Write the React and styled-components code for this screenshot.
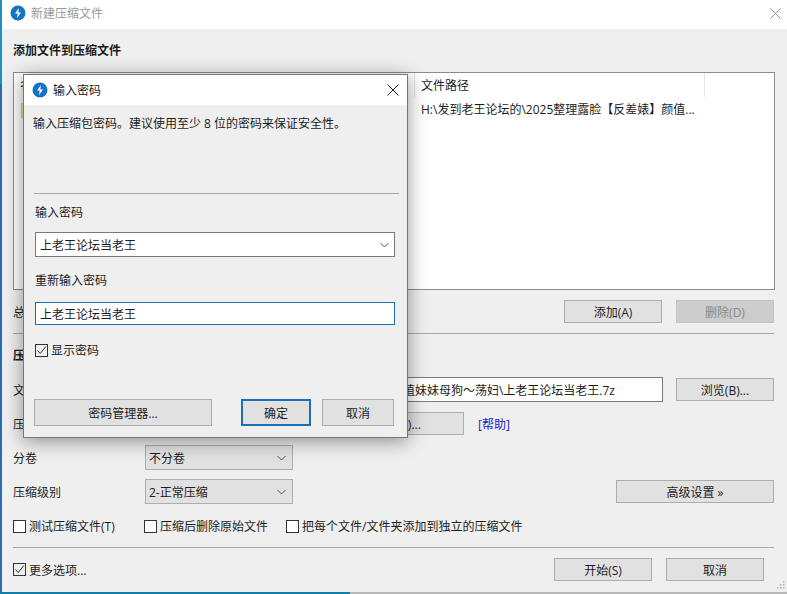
import styled, { createGlobalStyle } from "styled-components";

const Global = createGlobalStyle`
  html, body { margin: 0; padding: 0; }
  body {
    width: 787px;
    height: 594px;
    overflow: hidden;
    font-family: "Open Sans", "Noto Sans CJK SC", sans-serif;
    font-size: 12px;
    color: #1c1c1c;
  }
  * { box-sizing: border-box; }
`;

const Desktop = styled.div`
  position: relative;
  width: 787px;
  height: 594px;
  padding: 0 0 2px 2px;
  background:
    linear-gradient(90deg, #0f7fa8 0 350px, #b9b9b9 350px) bottom / 100% 2px no-repeat,
    linear-gradient(180deg, #1b93bf 0 84px, #2a6db5 84px);
`;

const Window = styled.div`
  position: relative;
  height: 100%;
  display: flex;
  flex-direction: column;
  background: #efefef;
`;

const TitleBar = styled.div`
  height: 29px;
  flex: none;
  display: flex;
  align-items: center;
  gap: 5px;
  padding: 0 6px 3px 8px;
  background: #fff;
  color: #999;
`;

const DialogTitleBar = styled(TitleBar)`
  height: 30px;
  padding: 0 8px 1px 8px;
  color: #1c1c1c;
`;

const TitleText = styled.span`
  flex: 1;
`;

const Body = styled.div`
  flex: 1;
  display: flex;
  flex-direction: column;
  padding: 14px 12px 0 11px;
`;

const Heading = styled.div`
  font-weight: 700;
  line-height: 16px;
  margin-top: ${(p) => p.$top || 0}px;
`;

const FileList = styled.div`
  height: 218px;
  margin-top: 13px;
  background: #fff;
  border: 1px solid #8c8c8c;
`;

const ListHead = styled.div`
  height: 24px;
  display: flex;
  line-height: 25px;
`;

const HeadCell = styled.div`
  width: ${(p) => p.$w}px;
  padding-left: 6px;
  border-right: 1px solid #e5e5e5;
`;

const ListRow = styled.div`
  display: flex;
  align-items: center;
  height: 24px;
`;

const RowCell = styled.div`
  width: ${(p) => p.$w}px;
  padding-left: 6px;
  white-space: nowrap;
  overflow: hidden;
`;

const FolderMark = styled.span`
  display: inline-block;
  width: 14px;
  height: 15px;
  margin-left: 1px;
  vertical-align: middle;
  background: #f3e3ad;
  border-left: 1px solid #d8c88a;
`;

const ActionRow = styled.div`
  display: flex;
  align-items: center;
  margin-top: 10px;
  padding-right: 1px;
  gap: 14px;
`;

const Stretch = styled.div`
  flex: 1;
`;

const Button = styled.button`
  width: ${(p) => p.$w || 98}px;
  height: ${(p) => p.$h || 23}px;
  flex: none;
  padding: 0;
  margin-left: ${(p) => p.$left || 0}px;
  margin-right: ${(p) => p.$right || 0}px;
  font: inherit;
  color: ${(p) => (p.disabled ? "#8a8a8a" : "#1c1c1c")};
  background: ${(p) => (p.disabled ? "#cccccc" : "#e1e1e1")};
  border: ${(p) => (p.$primary ? "2px solid #1a6fb5" : p.disabled ? "1px solid #c4c4c4" : "1px solid #adadad")};
`;

const Divider = styled.div`
  height: 1px;
  flex: none;
  margin-top: ${(p) => p.$top}px;
  margin-right: 1px;
  background: #a8a8a8;
`;

const FormRow = styled.div`
  display: flex;
  align-items: center;
  height: ${(p) => p.$h || 25}px;
  margin-top: ${(p) => p.$top}px;
  padding-right: 1px;
`;

const FormLabel = styled.div`
  width: 132px;
  flex: none;
`;

const PathField = styled.div`
  width: 518px;
  height: 25px;
  flex: none;
  display: flex;
  align-items: center;
  justify-content: flex-end;
  overflow: hidden;
  white-space: nowrap;
  padding-right: 47px;
  background: #fff;
  border: 1px solid #7a7a7a;
`;

const Select = styled.div`
  width: ${(p) => p.$w || 148}px;
  height: 25px;
  flex: none;
  display: flex;
  align-items: center;
  justify-content: space-between;
  padding: 0 6px 0 3px;
  background: #e1e1e1;
  border: 1px solid #adadad;
`;

const Link = styled.a`
  color: #1a1acc;
  margin-left: 14px;
`;

const CheckRow = styled.div`
  display: flex;
  align-items: center;
  margin-top: ${(p) => p.$top}px;
  height: 16px;
`;

const CheckLabel = styled.label`
  display: flex;
  align-items: center;
  gap: 3px;
  width: ${(p) => p.$w || "auto"};
`;

const Box = styled.span`
  width: 13px;
  height: 13px;
  flex: none;
  display: flex;
  background: ${(p) => (p.$clear ? "transparent" : "#fff")};
  border: 1px solid #333;
`;

const Footer = styled.div`
  display: flex;
  align-items: center;
  gap: 14px;
  margin-top: 10px;
  padding-right: 11px;
`;

const Grip = styled.svg`
  position: absolute;
  right: 2px;
  bottom: 2px;
`;

const Dialog = styled.div`
  position: absolute;
  left: 23px;
  top: 74px;
  width: 385px;
  height: 364px;
  display: flex;
  flex-direction: column;
  background: #efefef;
  border: 1px solid #777;
  box-shadow: 0 3px 18px rgba(0, 0, 0, 0.42);
`;

const DialogBody = styled.div`
  flex: 1;
  display: flex;
  flex-direction: column;
  padding: 0 8px 0 10px;
`;

const Hint = styled.div`
  margin: 11px 0 0 -1px;
  line-height: 16px;
`;

const DialogLine = styled.div`
  height: 1px;
  margin-top: 61px;
  background: #a8a8a8;
`;

const FieldLabel = styled.div`
  line-height: 16px;
  margin: ${(p) => p.$top}px 0 0 1px;
`;

const PasswordSelect = styled.div`
  width: 360px;
  height: 25px;
  margin: 11px 0 0 1px;
  display: flex;
  align-items: center;
  justify-content: space-between;
  padding: 0 5px 0 4px;
  background: #fff;
  border: 1px solid #7a7a7a;
`;

const PasswordInput = styled.div`
  width: 360px;
  height: 23px;
  margin: 13px 0 0 1px;
  display: flex;
  align-items: center;
  padding-left: 4px;
  background: #fff;
  border: 1px solid #1a6fb5;
`;

const ShowRow = styled.div`
  margin: 16px 0 0 1px;
`;

const DialogButtons = styled.div`
  display: flex;
  align-items: center;
  margin-top: 40px;
`;

const Logo = () => (
  <svg width="16" height="16" viewBox="0 0 16 16">
    <circle cx="8" cy="8" r="7.5" fill="#1572c6" />
    <path d="M9 3 5 8.6h2.7L7 13l4-5.6H8.3z" fill="#fff" />
  </svg>
);

const Close = ({ color, size }) => (
  <svg width={size} height={size} viewBox="0 0 12 12">
    <path d="M.5.5l11 11M11.5.5l-11 11" stroke={color} strokeWidth="1" fill="none" />
  </svg>
);

const Chevron = () => (
  <svg width="9" height="6" viewBox="0 0 9 6">
    <path d="M.5 1l4 4 4-4" stroke="#555" strokeWidth="1" fill="none" />
  </svg>
);

const Tick = () => (
  <svg width="11" height="11" viewBox="0 0 11 11">
    <path d="M1.5 5.5l2.8 3L9.8 1.5" stroke="#333" strokeWidth="1" fill="none" />
  </svg>
);

const Check = ({ checked, width, children }) => (
  <CheckLabel $w={width}>
    <Box $clear={checked}>{checked && <Tick />}</Box>
    {children}
  </CheckLabel>
);

const App = () => {
  return (
    <Desktop>
      <Global />
      <Window>
        <TitleBar>
          <Logo />
          <TitleText>新建压缩文件</TitleText>
          <Close color="#8a8a8a" size={11} />
        </TitleBar>
        <Body>
          <Heading>添加文件到压缩文件</Heading>
          <FileList>
            <ListHead>
              <HeadCell $w={401}>名称</HeadCell>
              <HeadCell $w={290}>文件路径</HeadCell>
            </ListHead>
            <ListRow>
              <RowCell $w={401}><FolderMark /></RowCell>
              <RowCell $w={290}>H:\发到老王论坛的\2025整理露脸【反差婊】颜值...</RowCell>
            </ListRow>
          </FileList>
          <ActionRow>
            <span>总大小</span>
            <Stretch />
            <Button>添加(A)</Button>
            <Button disabled>删除(D)</Button>
          </ActionRow>
          <Divider $top={10} />
          <Heading $top={14}>压缩选项</Heading>
          <FormRow $top={13}>
            <FormLabel>文件名</FormLabel>
            <PathField>颜值妹妹母狗～荡妇\上老王论坛当老王.7z</PathField>
            <Stretch />
            <Button>浏览(B)...</Button>
          </FormRow>
          <FormRow $top={10} $h={23}>
            <FormLabel>压缩格式</FormLabel>
            <Select $w={140}>7z<Chevron /></Select>
            <Button $w={158} $left={21}>设置密码(P)...</Button>
            <Link>[帮助]</Link>
          </FormRow>
          <FormRow $top={10}>
            <FormLabel>分卷</FormLabel>
            <Select>不分卷<Chevron /></Select>
          </FormRow>
          <FormRow $top={9}>
            <FormLabel>压缩级别</FormLabel>
            <Select>2-正常压缩<Chevron /></Select>
            <Stretch />
            <Button $w={158}>高级设置 »</Button>
          </FormRow>
          <CheckRow $top={14}>
            <Check width="131px">测试压缩文件(T)</Check>
            <Check width="142px">压缩后删除原始文件</Check>
            <Check>把每个文件/文件夹添加到独立的压缩文件</Check>
          </CheckRow>
          <Divider $top={13} />
          <Footer>
            <Check checked>更多选项...</Check>
            <Stretch />
            <Button>开始(S)</Button>
            <Button>取消</Button>
          </Footer>
        </Body>
        <Grip width="10" height="10" viewBox="0 0 10 10">
          <path d="M8 1h1.5v1.5H8zM5 4h1.5v1.5H5zM8 4h1.5v1.5H8zM2 7h1.5v1.5H2zM5 7h1.5v1.5H5zM8 7h1.5v1.5H8z" fill="#b5b5b5" />
        </Grip>
      </Window>
      <Dialog>
        <DialogTitleBar>
          <Logo />
          <TitleText>输入密码</TitleText>
          <Close color="#222" size={12} />
        </DialogTitleBar>
        <DialogBody>
          <Hint>输入压缩包密码。建议使用至少 8 位的密码来保证安全性。</Hint>
          <DialogLine />
          <FieldLabel $top={11}>输入密码</FieldLabel>
          <PasswordSelect>上老王论坛当老王<Chevron /></PasswordSelect>
          <FieldLabel $top={16}>重新输入密码</FieldLabel>
          <PasswordInput>上老王论坛当老王</PasswordInput>
          <ShowRow>
            <Check checked>显示密码</Check>
          </ShowRow>
          <DialogButtons>
            <Button $w={178} $h={27}>密码管理器...</Button>
            <Stretch />
            <Button $w={70} $h={27} $primary>确定</Button>
            <Button $w={72} $h={27} $left={11} $right={5}>取消</Button>
          </DialogButtons>
        </DialogBody>
      </Dialog>
    </Desktop>
  );
};

export default App;
